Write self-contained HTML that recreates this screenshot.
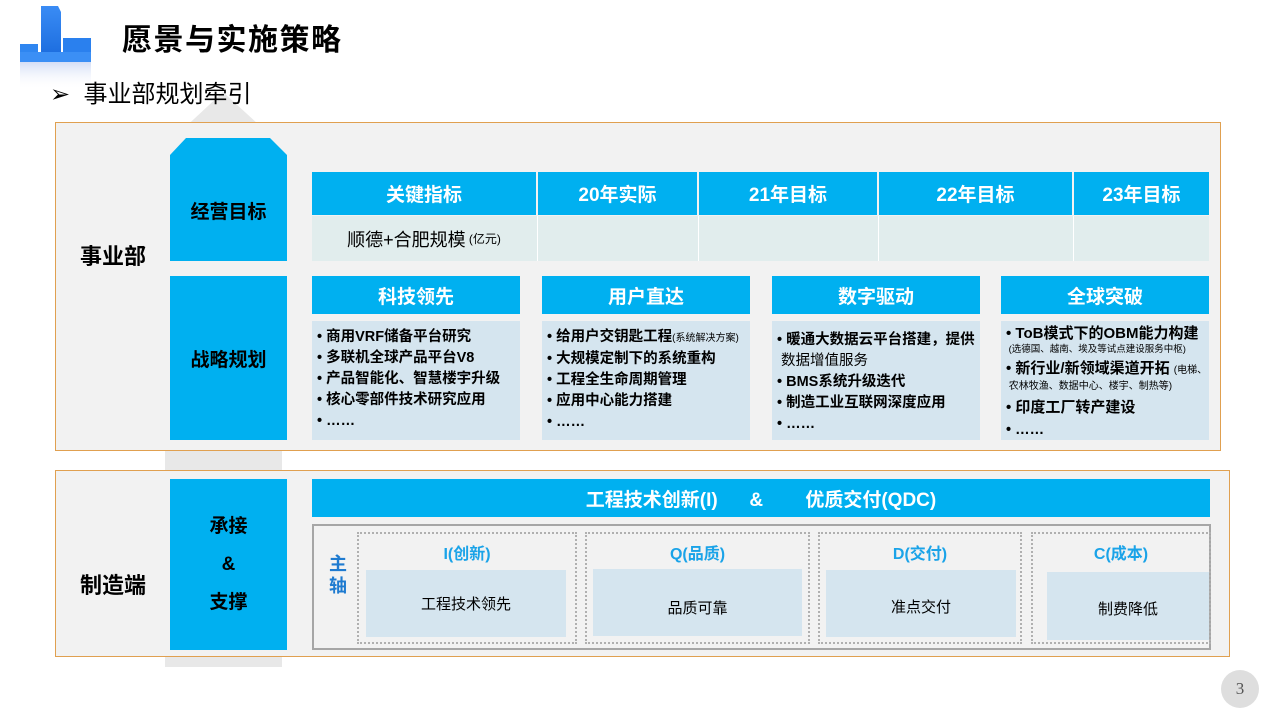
<!DOCTYPE html>
<html><head><meta charset="utf-8"><style>
*{margin:0;padding:0;box-sizing:border-box}
body{width:1280px;height:720px;background:#fff;position:relative;overflow:hidden;font-family:"Liberation Sans","Noto Sans CJK SC","Microsoft YaHei",sans-serif;color:#000}
.a{position:absolute}
.blue{background:#00b0f0}
.c{display:flex;align-items:center;justify-content:center;text-align:center}
.hd{color:#fff;font-weight:bold;font-size:19px}
.lb{background:#d5e5ef}
.li{font-size:14.5px;font-weight:bold;line-height:21px;padding:6px 0 0 5px}
.li div{white-space:nowrap}
.sm{font-size:10px;font-weight:normal}
.dot{border:2px dotted #b0b0b0}
.qh{color:#1aa3e8;font-weight:bold;font-size:16px;text-align:center}
</style></head><body>
<!-- logo -->
<svg class="a" style="left:18px;top:4px" width="78" height="90">
<defs><linearGradient id="g" x1="0" y1="0" x2="0" y2="1"><stop offset="0" stop-color="#3a8cf5"/><stop offset="1" stop-color="#1e6fe0"/></linearGradient>
<linearGradient id="r" x1="0" y1="0" x2="0" y2="1"><stop offset="0" stop-color="#b8c8f0" stop-opacity=".6"/><stop offset="1" stop-color="#fff" stop-opacity="0"/></linearGradient></defs>
<path d="M23 2 L40 2 L43 8 L43 48 L23 48Z" fill="url(#g)"/>
<path d="M2 40 L20 40 L20 48 L2 48Z" fill="#2f86f0"/>
<path d="M45 34 L73 34 L73 58 L45 58Z" fill="#2a80ee"/>
<path d="M2 48 L73 48 L73 58 L2 58Z" fill="#3b8ff5"/>
<rect x="2" y="58" width="71" height="28" fill="url(#r)"/>
</svg>
<!-- gray arrow -->
<div class="a" style="left:165px;top:140px;width:117px;height:527px;background:#e8e8e8"></div>
<svg class="a" style="left:165px;top:92px" width="117" height="54"><path d="M58 0 L117 54 L0 54Z" fill="#e8e8e8"/></svg>
<div class="a" style="left:122px;top:15px;font-size:30px;font-weight:bold;letter-spacing:1.5px">愿景与实施策略</div>
<div class="a" style="left:50px;top:74px;font-size:24px">➢&nbsp;&nbsp;事业部规划牵引</div>
<!-- panels -->
<div class="a" style="left:55px;top:122px;width:1166px;height:329px;background:#f2f2f2;border:1px solid #e0a050"></div>
<div class="a" style="left:55px;top:470px;width:1175px;height:187px;background:#f2f2f2;border:1px solid #e0a050"></div>
<div class="a c" style="left:58px;top:238px;width:110px;height:34px;font-size:22px;font-weight:bold">事业部</div>
<div class="a c" style="left:58px;top:567px;width:110px;height:34px;font-size:22px;font-weight:bold">制造端</div>
<svg class="a" style="left:170px;top:138px" width="117" height="123"><path d="M16 0 L100 0 L117 17 L117 123 L0 123 L0 17Z" fill="#00b0f0"/></svg>
<div class="a c" style="left:170px;top:195px;width:117px;height:30px;font-size:19px;font-weight:bold">经营目标</div>
<div class="a c blue" style="left:170px;top:276px;width:117px;height:164px;font-size:19px;font-weight:bold">战略规划</div>
<div class="a c blue" style="left:170px;top:479px;width:117px;height:171px;font-size:19px;font-weight:bold;line-height:38px">承接<br>&amp;<br>支撑</div>
<!-- table -->
<div class="a c blue hd" style="left:312px;top:172px;width:224px;height:43px">关键指标</div>
<div class="a c blue hd" style="left:538px;top:172px;width:159px;height:43px">20年实际</div>
<div class="a c blue hd" style="left:699px;top:172px;width:178px;height:43px">21年目标</div>
<div class="a c blue hd" style="left:879px;top:172px;width:193px;height:43px">22年目标</div>
<div class="a c blue hd" style="left:1074px;top:172px;width:135px;height:43px">23年目标</div>
<div class="a" style="left:312px;top:216px;width:897px;height:45px;background:#e1eded"></div>
<div class="a" style="left:537px;top:216px;width:1px;height:45px;background:#fff"></div>
<div class="a" style="left:698px;top:216px;width:1px;height:45px;background:#fff"></div>
<div class="a" style="left:878px;top:216px;width:1px;height:45px;background:#fff"></div>
<div class="a" style="left:1073px;top:216px;width:1px;height:45px;background:#fff"></div>
<div class="a c" style="left:312px;top:216px;width:224px;height:45px;font-size:18px">顺德+合肥规模<span style="font-size:12px">&nbsp;(亿元)</span></div>
<!-- strategy -->
<div class="a c blue hd" style="left:312px;top:276px;width:208px;height:38px">科技领先</div>
<div class="a c blue hd" style="left:542px;top:276px;width:208px;height:38px">用户直达</div>
<div class="a c blue hd" style="left:772px;top:276px;width:208px;height:38px">数字驱动</div>
<div class="a c blue hd" style="left:1001px;top:276px;width:208px;height:38px">全球突破</div>
<div class="a lb li" style="left:312px;top:321px;width:208px;height:119px"><div>• 商用VRF储备平台研究</div><div>• 多联机全球产品平台V8</div><div>• 产品智能化、智慧楼宇升级</div><div>• 核心零部件技术研究应用</div><div>• ……</div></div>
<div class="a lb li" style="left:542px;top:321px;width:208px;height:119px"><div>• 给用户交钥匙工程<span class="sm">(系统解决方案)</span></div><div>• 大规模定制下的系统重构</div><div>• 工程全生命周期管理</div><div>• 应用中心能力搭建</div><div>• ……</div></div>
<div class="a lb li" style="left:772px;top:321px;width:208px;height:119px;padding-top:9px"><div>• 暖通大数据云平台搭建，提供</div><div style="font-weight:normal">&nbsp;数据增值服务</div><div>• BMS系统升级迭代</div><div>• 制造工业互联网深度应用</div><div>• ……</div></div>
<div class="a lb li" style="left:1001px;top:321px;width:208px;height:119px;padding-top:4px;line-height:18px"><div style="font-size:15px">• ToB模式下的OBM能力构建</div><div class="sm" style="font-size:9.5px;line-height:13px">&nbsp;(选德国、越南、埃及等试点建设服务中枢)</div><div style="font-size:15px;margin-top:4px">• 新行业/新领域渠道开拓 <span class="sm">(电梯、</span></div><div class="sm" style="line-height:14px">&nbsp;农林牧渔、数据中心、楼宇、制热等)</div><div style="font-size:15px;margin-top:5px">• 印度工厂转产建设</div><div style="margin-top:4px">• ……</div></div>
<!-- bottom -->
<div class="a c blue hd" style="left:312px;top:479px;width:898px;height:38px;font-size:19px">工程技术创新(I)&nbsp;&nbsp;&nbsp;&nbsp;&nbsp;&nbsp;&amp;&nbsp;&nbsp;&nbsp;&nbsp;&nbsp;&nbsp;&nbsp;&nbsp;优质交付(QDC)</div>
<div class="a" style="left:312px;top:524px;width:899px;height:126px;border:2px solid #a6a6a6"></div>
<div class="a" style="left:329px;top:553px;width:20px;font-size:18px;font-weight:bold;color:#1f7bd0;line-height:22px">主<br>轴</div>
<div class="a dot" style="left:357px;top:532px;width:220px;height:112px"></div>
<div class="a dot" style="left:585px;top:532px;width:225px;height:112px"></div>
<div class="a dot" style="left:818px;top:532px;width:204px;height:112px"></div>
<div class="a dot" style="left:1031px;top:532px;width:180px;height:112px"></div>
<div class="a qh" style="left:357px;top:540px;width:220px">I(创新)</div>
<div class="a qh" style="left:585px;top:540px;width:225px">Q(品质)</div>
<div class="a qh" style="left:818px;top:540px;width:204px">D(交付)</div>
<div class="a qh" style="left:1031px;top:540px;width:180px">C(成本)</div>
<div class="a lb c" style="left:366px;top:570px;width:200px;height:67px;font-size:15px">工程技术领先</div>
<div class="a lb c" style="left:593px;top:569px;width:209px;height:67px;font-size:15px;padding-top:9px">品质可靠</div>
<div class="a lb c" style="left:826px;top:570px;width:190px;height:67px;font-size:15px;padding-top:6px">准点交付</div>
<div class="a lb c" style="left:1047px;top:572px;width:162px;height:68px;font-size:15px;padding-top:4px">制费降低</div>
<div class="a c" style="left:1221px;top:670px;width:38px;height:38px;border-radius:50%;background:#dedede;font-family:'Liberation Serif',serif;font-size:17px;color:#555">3</div>
</body></html>
